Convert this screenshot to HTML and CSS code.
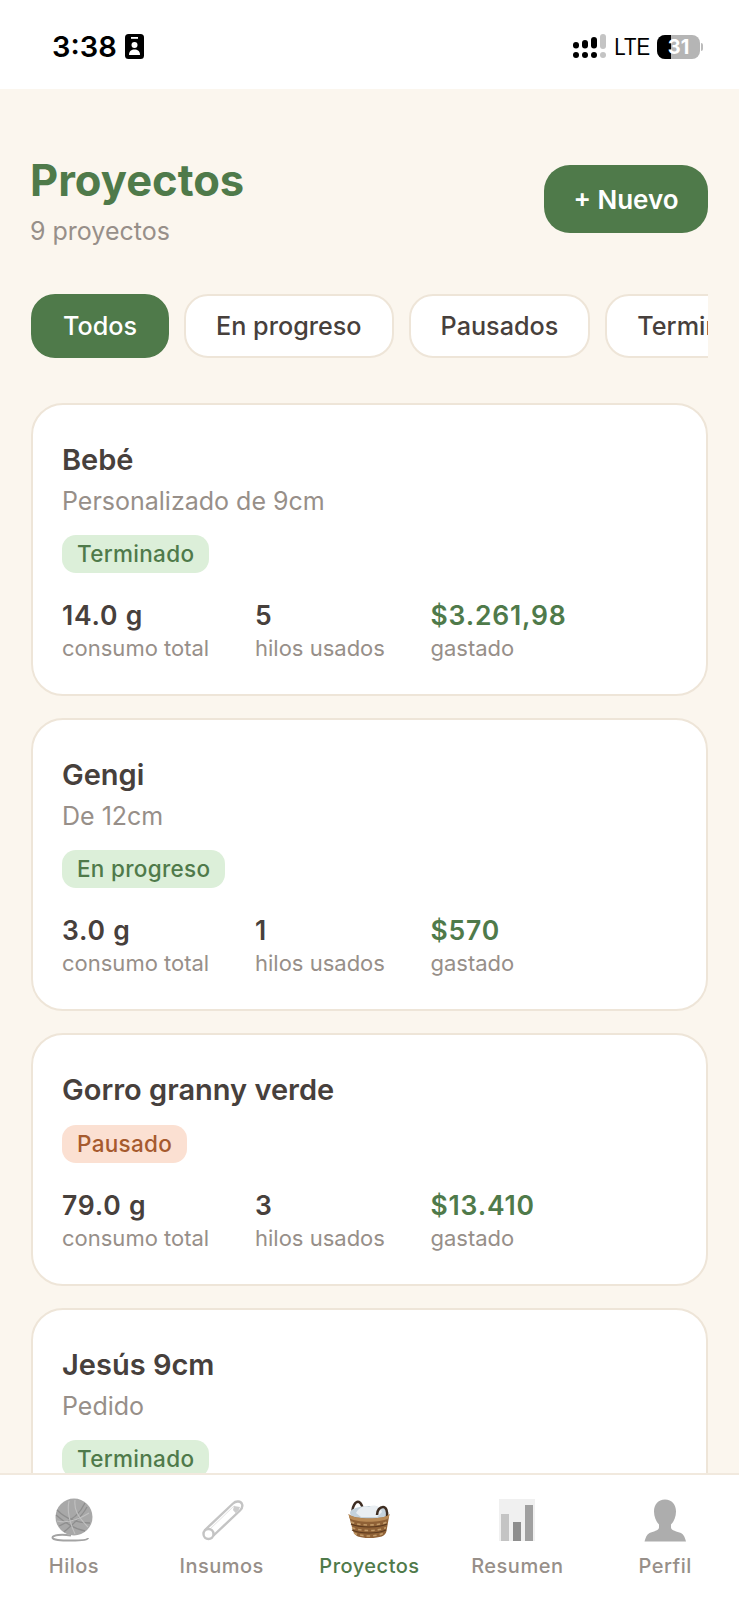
FILE: index.html
```html
<!DOCTYPE html>
<html lang="es">
<head>
<meta charset="utf-8">
<title>Proyectos</title>
<link rel="stylesheet" href="styles.css">
</head>
<body>
<div class="app">
  <header class="status">
    <div class="status-left">
      <span class="clock">3:38</span>
      <svg class="focus" width="19" height="25" viewBox="0 0 19 25"><rect width="19" height="25" rx="3.5" fill="#000"/><rect x="6" y="3" width="7" height="1.8" fill="#fff"/><circle cx="9.5" cy="11" r="3" fill="#fff"/><path d="M4 21c0-4 2.500-5.500 5.500-5.500S15 17 15 21z" fill="#fff"/></svg>
    </div>
    <div class="status-right">
      <svg width="34" height="25" viewBox="0 0 34 25"><g fill="#000"><rect x="0" y="8" width="6" height="6.500" rx="3"/><rect x="9" y="6" width="6" height="8.500" rx="3"/><rect x="18" y="3" width="6" height="11.500" rx="3"/><circle cx="3" cy="21" r="3"/><circle cx="12" cy="21" r="3"/><circle cx="21" cy="21" r="3"/></g><g fill="#c4c4c4"><rect x="27" y="0" width="6" height="15" rx="3"/><circle cx="30" cy="21" r="3"/></g></svg>
      <span class="lte">LTE</span>
      <div class="battery"><span class="battery-fill"></span><span class="battery-num">31</span></div>
      <span class="battery-cap"></span>
    </div>
  </header>
  <main class="content">
    <div class="head">
      <div class="head-text">
        <h1 class="title">Proyectos</h1>
        <p class="count">9 proyectos</p>
      </div>
      <button class="new">+ Nuevo</button>
    </div>
    <div class="filters">
      <span class="chip chip-on">Todos</span>
      <span class="chip">En progreso</span>
      <span class="chip">Pausados</span>
      <span class="chip">Terminados</span>
    </div>
    <section class="list">
      <article class="card">
        <h2 class="name">Bebé</h2>
        <p class="desc">Personalizado de 9cm</p>
        <span class="tag tag-green">Terminado</span>
        <div class="stats">
          <div class="stat s1"><b>14.0 g</b><small>consumo total</small></div>
          <div class="stat s2"><b>5</b><small>hilos usados</small></div>
          <div class="stat"><b class="money">$3.261,98</b><small>gastado</small></div>
        </div>
      </article>
      <article class="card">
        <h2 class="name">Gengi</h2>
        <p class="desc">De 12cm</p>
        <span class="tag tag-green">En progreso</span>
        <div class="stats">
          <div class="stat s1"><b>3.0 g</b><small>consumo total</small></div>
          <div class="stat s2"><b>1</b><small>hilos usados</small></div>
          <div class="stat"><b class="money">$570</b><small>gastado</small></div>
        </div>
      </article>
      <article class="card">
        <h2 class="name">Gorro granny verde</h2>
        <span class="tag tag-orange">Pausado</span>
        <div class="stats">
          <div class="stat s1"><b>79.0 g</b><small>consumo total</small></div>
          <div class="stat s2"><b>3</b><small>hilos usados</small></div>
          <div class="stat"><b class="money">$13.410</b><small>gastado</small></div>
        </div>
      </article>
      <article class="card">
        <h2 class="name">Jesús 9cm</h2>
        <p class="desc">Pedido</p>
        <span class="tag tag-green">Terminado</span>
      </article>
    </section>
  </main>
  <nav class="tabs">
    <div class="tab">
      <svg width="50" height="44" viewBox="0 0 50 44"><path d="M22 37.500C12 36 4 37 3.500 39.500S12 42.500 22 42.500s17-.5 17-2.500" fill="none" stroke="#a3a3a3" stroke-width="2"/><circle cx="25" cy="19" r="18.500" fill="#a8a8a8"/><g fill="none" stroke="#8e8e8e" stroke-width="1.300"><path d="M8 12c8 8 20 13 33 13"/><path d="M7 17c9 8 19 14 29 16"/><path d="M10 28c10-4 21-12 26-23"/><path d="M15 34c8-7 18-15 23-25"/></g><g fill="none" stroke="#c0c0c0" stroke-width="1.100"><path d="M20 3c-2 9 0 20 6 33"/><path d="M26 2c-1 9 2 16 13 27"/><path d="M8 23c8 2 18 1 32-8"/></g></svg>
      <span>Hilos</span>
    </div>
    <div class="tab">
      <svg width="50" height="44" viewBox="0 0 50 44"><g fill="none" stroke-linecap="round"><path d="M8 32 L36 5.500 C39 2.500 44 3 45 6 C46 8.500 45 10.500 43 12.500 L16 38" stroke="#c4c4c4" stroke-width="2.400"/><path d="M11 33 L37 8" stroke="#e4e4e4" stroke-width="1"/></g><circle cx="11.500" cy="36" r="5" fill="#fff" stroke="#c4c4c4" stroke-width="2.400"/><path d="M37 8l6 1-1.500 3.500-3 2.500-2.500-3z" fill="#cdcdcd"/></svg>
      <span>Insumos</span>
    </div>
    <div class="tab tab-on">
      <svg width="50" height="44" viewBox="0 0 50 44"><path d="M9 18C7 8 12 3 15 4c3 1 4 6 5 11" fill="none" stroke="#3e2d22" stroke-width="2.500"/><ellipse cx="25" cy="15" rx="19" ry="7" fill="#c4d2dc"/><path d="M12 15c3-6 9-8 13-6 5-3 11-1 13 5l-5 5H17z" fill="#e9eef2"/><path d="M33 17c0-5 3-8 6-8s5 4 4 11" fill="none" stroke="#3e2d22" stroke-width="2.500"/><path d="M4.500 16c5 6 37 6 41 0l-3 17c-1 5-6 7-17 7S11 38 9 33z" fill="#8f6136"/><path d="M4.500 16c5 6 37 6 41 0l-1 4c-6 5-33 5-39 0z" fill="#b98a55"/><g fill="none" stroke="#5c3a1e" stroke-width="1.200"><path d="M7 26c8 4 28 4 36 0"/><path d="M8 32c8 4 26 4 34 0"/></g><g fill="none" stroke="#c29a68" stroke-width="1.600" stroke-dasharray="3.500 3"><path d="M7 24c8 4 28 4 36 0"/><path d="M8 29.500c8 4 26 4 34 0"/><path d="M10 35c8 4 22 4 30 0"/></g></svg>
      <span>Proyectos</span>
    </div>
    <div class="tab">
      <svg width="50" height="44" viewBox="0 0 50 44"><rect x="7" y="1" width="36" height="42" fill="#f0f0f0"/><rect x="9" y="16" width="8" height="27" fill="#c4c4c4"/><rect x="21" y="24" width="8" height="19" fill="#8e8e8e"/><rect x="33" y="7" width="8" height="36" fill="#a0a0a0"/></svg>
      <span>Resumen</span>
    </div>
    <div class="tab">
      <svg width="50" height="44" viewBox="0 -1.500 50 44"><path d="M25 0c7 0 11 5 11 12 0 5-2 10-5 13v3c0 3 6 4 10 5.500 3 1.500 4 5 5 8.500H4.500c1-3.500 2-7 5-8.500C13 32 19 31 19 28v-3c-3-3-5-8-5-13C14 5 18 0 25 0z" fill="#adadad"/></svg>
      <span>Perfil</span>
    </div>
  </nav>
</div>
</body>
</html>
```
FILE: styles.css
```css
* { box-sizing: border-box; }
html, body { margin: 0; padding: 0; height: 100%; }
body { font-family: Inter, "Liberation Sans", sans-serif; background: #fbf6ee; color: #47403c; }
.app { display: flex; flex-direction: column; height: 1600px; overflow: hidden; }

.status { flex: none; height: 89px; background: #fff; display: flex; align-items: center; justify-content: space-between; padding: 4px 36px 0 52px; }
.status-left { display: flex; align-items: center; gap: 8px; }
.clock { font-size: 29px; font-weight: 600; color: #000; line-height: 1; font-family: Inter, sans-serif; }
.status-right { display: flex; align-items: center; gap: 7px; }
.lte { font-size: 24px; font-weight: 500; color: #000; font-family: "Liberation Sans", sans-serif; transform: scaleX(.85); margin: 0 -3px; }
.battery { position: relative; width: 43px; height: 24px; border-radius: 8px; background: #b5b5b5; overflow: hidden; display: flex; align-items: center; justify-content: center; }
.battery-fill { position: absolute; left: 0; top: 0; bottom: 0; width: 14px; background: #000; }
.battery-num { position: relative; font-size: 20px; font-weight: 700; color: #fff; line-height: 1; }
.battery-cap { width: 2px; height: 8px; background: #bbb; border-radius: 0 2px 2px 0; margin-left: -6px; }

.content { flex: 1; min-height: 0; overflow: hidden; padding: 0 31px; }
.head { display: flex; align-items: flex-start; justify-content: space-between; padding-top: 69px; }
.head-text { margin-left: -1px; }
.title { margin: 0; font-size: 43.500px; line-height: 44px; font-weight: 700; color: #4f7a4a; }
.count { margin: 14px 0 0; font-size: 25px; line-height: 30px; color: #978f89; }
.new { margin-top: 7px; width: 164px; height: 68px; border: 0; border-radius: 26px; background: #4f7a4a; color: #fff; font: 600 26px Inter, sans-serif; }

.filters { display: flex; gap: 15px; margin-top: 48px; overflow: hidden; }
.chip { flex: none; height: 64px; padding: 0 30px; display: flex; align-items: center; border: 2px solid #eee5d8; border-radius: 24px; background: #fff; font-size: 25.200px; font-weight: 500; color: #47403c; }
.chip-on { background: #4f7a4a; border-color: #4f7a4a; color: #fff; }

.list { display: flex; flex-direction: column; gap: 22px; margin-top: 45px; }
.card { flex: none; padding: 36px 29px 29px; background: #fff; border: 2px solid #eee5d8; border-radius: 32px; }
.name { margin: 0; font-size: 29px; line-height: 38px; font-weight: 600; color: #47403c; }
.desc { margin: 5px 0 0; font-size: 25px; line-height: 34px; color: #978f89; }
.tag { display: inline-block; margin-top: 17px; padding: 0 15px; height: 38px; line-height: 38px; border-radius: 14px; font-size: 22.500px; font-weight: 500; letter-spacing: .3px; }
.name + .tag { margin-top: 16px; }
.tag-green { background: #dcefd9; color: #4f7a4a; }
.tag-orange { background: #fbe0d2; color: #a65a2e; }
.stats { display: flex; margin-top: 25px; }
.stat { display: flex; flex-direction: column; }
.s1 { width: 193px; }
.s2 { width: 175.500px; }
.stat b { font-size: 26.500px; line-height: 34px; font-weight: 600; color: #47403c; letter-spacing: .8px; }
.stat b.money { color: #4f7a4a; }
.stat small { font-size: 22px; line-height: 33px; color: #978f89; }

.tabs { flex: none; height: 127px; display: grid; grid-template-columns: repeat(5, 1fr); background: #fff; border-top: 2px solid #f1e9de; padding-top: 23px; }
.tab { display: flex; flex-direction: column; align-items: center; font-size: 20px; font-weight: 500; color: #978f89; letter-spacing: .5px; }
.tab span { margin-top: 10px; line-height: 28px; }
.tab-on { color: #4f7a4a; }
```
